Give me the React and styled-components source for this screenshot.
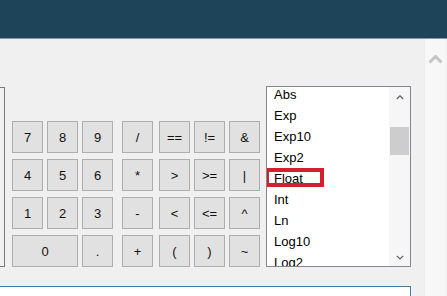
import React from "react";
import styled, { createGlobalStyle } from "styled-components";

const GlobalStyle = createGlobalStyle`
  html, body {
    margin: 0;
    padding: 0;
    overflow: hidden;
    background: #f0f0f0;
    font-family: "Liberation Sans", Arial, sans-serif;
  }
`;

const Window = styled.div`
  width: 447px;
  height: 296px;
  display: flex;
  flex-direction: column;
  overflow: hidden;
`;

const TitleBar = styled.div`
  height: 38px;
  flex: none;
  background: #1e4459;
  border-bottom: 1px solid #8797a2;
`;

const Body = styled.div`
  flex: 1;
  display: flex;
  min-height: 0;
`;

const Content = styled.div`
  flex: 1;
  display: flex;
  flex-direction: column;
  padding-top: 47px;
`;

const Strip = styled.div`
  width: 22px;
  flex: none;
  margin-right: 1px;
  background: #f7f7f7;
  border-left: 1px solid #ececec;
  display: flex;
  justify-content: center;
  padding-top: 16px;
  box-sizing: border-box;
`;

const Row = styled.div`
  display: flex;
  height: 181px;
  align-items: flex-end;
`;

const TextBox = styled.div`
  width: 5px;
  align-self: stretch;
  margin-top: 1px;
  box-sizing: border-box;
  background: #f0f0f0;
  border: 1px solid #7a7a7a;
  border-left: none;
  margin-right: 7px;
`;

const Pad = styled.div`
  display: grid;
  grid-template-columns: ${(p) => p.cols};
  grid-auto-rows: 32px;
  column-gap: ${(p) => p.gap || 0}px;
  row-gap: 6px;
  margin-right: ${(p) => p.right || 0}px;
`;

const Key = styled.div`
  width: ${(p) => (p.wide ? "auto" : "31px")};
  grid-column: ${(p) => (p.wide ? "span 2" : "auto")};
  box-sizing: border-box;
  background: #e1e1e1;
  border: 1px solid #adadad;
  display: flex;
  align-items: center;
  justify-content: center;
  font-size: 13px;
  color: #111;
`;

const ListBox = styled.div`
  width: 145px;
  align-self: stretch;
  box-sizing: border-box;
  border: 1px solid #828790;
  background: #fff;
  display: flex;
  overflow: hidden;
  margin-left: 6px;
`;

const Items = styled.div`
  flex: 1;
  margin-top: -3px;
`;

const Item = styled.div`
  position: relative;
  height: 21px;
  line-height: 21px;
  padding-left: 7px;
  font-size: 13px;
  color: #000;
`;

const Highlight = styled.span`
  position: absolute;
  left: -2px;
  top: 0;
  width: 59px;
  height: 19px;
  box-sizing: border-box;
  border: 4px solid #d3202f;
`;

const ScrollBar = styled.div`
  width: 21px;
  flex: none;
  background: #f6f6f6;
  display: flex;
  flex-direction: column;
  align-items: center;
  padding: 8px 0 6px;
  box-sizing: border-box;
`;

const Thumb = styled.div`
  width: 19px;
  height: 28px;
  background: #cdcdcd;
  margin-top: 27px;
`;

const Spacer = styled.div`
  flex: 1;
`;

const Output = styled.div`
  margin-top: 19px;
  width: 411px;
  height: 30px;
  box-sizing: border-box;
  background: #fff;
  border-top: 1px solid #3d7fa3;
  border-right: 1px solid #3d7fa3;
`;

const Chevron = ({ down, size = 8, color = "#606060", stroke = 1.5 }) => (
  <svg width={size} height={size * 0.6} viewBox="0 0 10 6">
    <path
      d={down ? "M1 1 L5 5 L9 1" : "M1 5 L5 1 L9 5"}
      fill="none"
      stroke={color}
      strokeWidth={stroke}
    />
  </svg>
);

const numKeys = ["7", "8", "9", "4", "5", "6", "1", "2", "3"];
const opKeys = ["/", "==", "!=", "&", "*", ">", ">=", "|", "-", "<", "<=", "^", "+", "(", ")", "~"];
const funcs = ["Abs", "Exp", "Exp10", "Exp2", "Float", "Int", "Ln", "Log10", "Log2"];

export default function App() {
  return (
    <>
      <GlobalStyle />
      <Window>
        <TitleBar />
        <Body>
          <Content>
            <Row>
              <TextBox />
              <Pad cols="31px 31px 31px" gap={4} right={9}>
                {numKeys.map((k) => (
                  <Key key={k}>{k}</Key>
                ))}
                <Key wide>0</Key>
                <Key>.</Key>
              </Pad>
              <Pad cols="37px 35px 35px 31px">
                {opKeys.map((k) => (
                  <Key key={k}>{k}</Key>
                ))}
              </Pad>
              <ListBox>
                <Items>
                  {funcs.map((f) => (
                    <Item key={f}>
                      {f}
                      {f === "Float" && <Highlight />}
                    </Item>
                  ))}
                </Items>
                <ScrollBar>
                  <Chevron />
                  <Thumb />
                  <Spacer />
                  <Chevron down />
                </ScrollBar>
              </ListBox>
            </Row>
            <Output />
          </Content>
          <Strip>
            <Chevron size={15} color="#c4c4c4" stroke={2} />
          </Strip>
        </Body>
      </Window>
    </>
  );
}
